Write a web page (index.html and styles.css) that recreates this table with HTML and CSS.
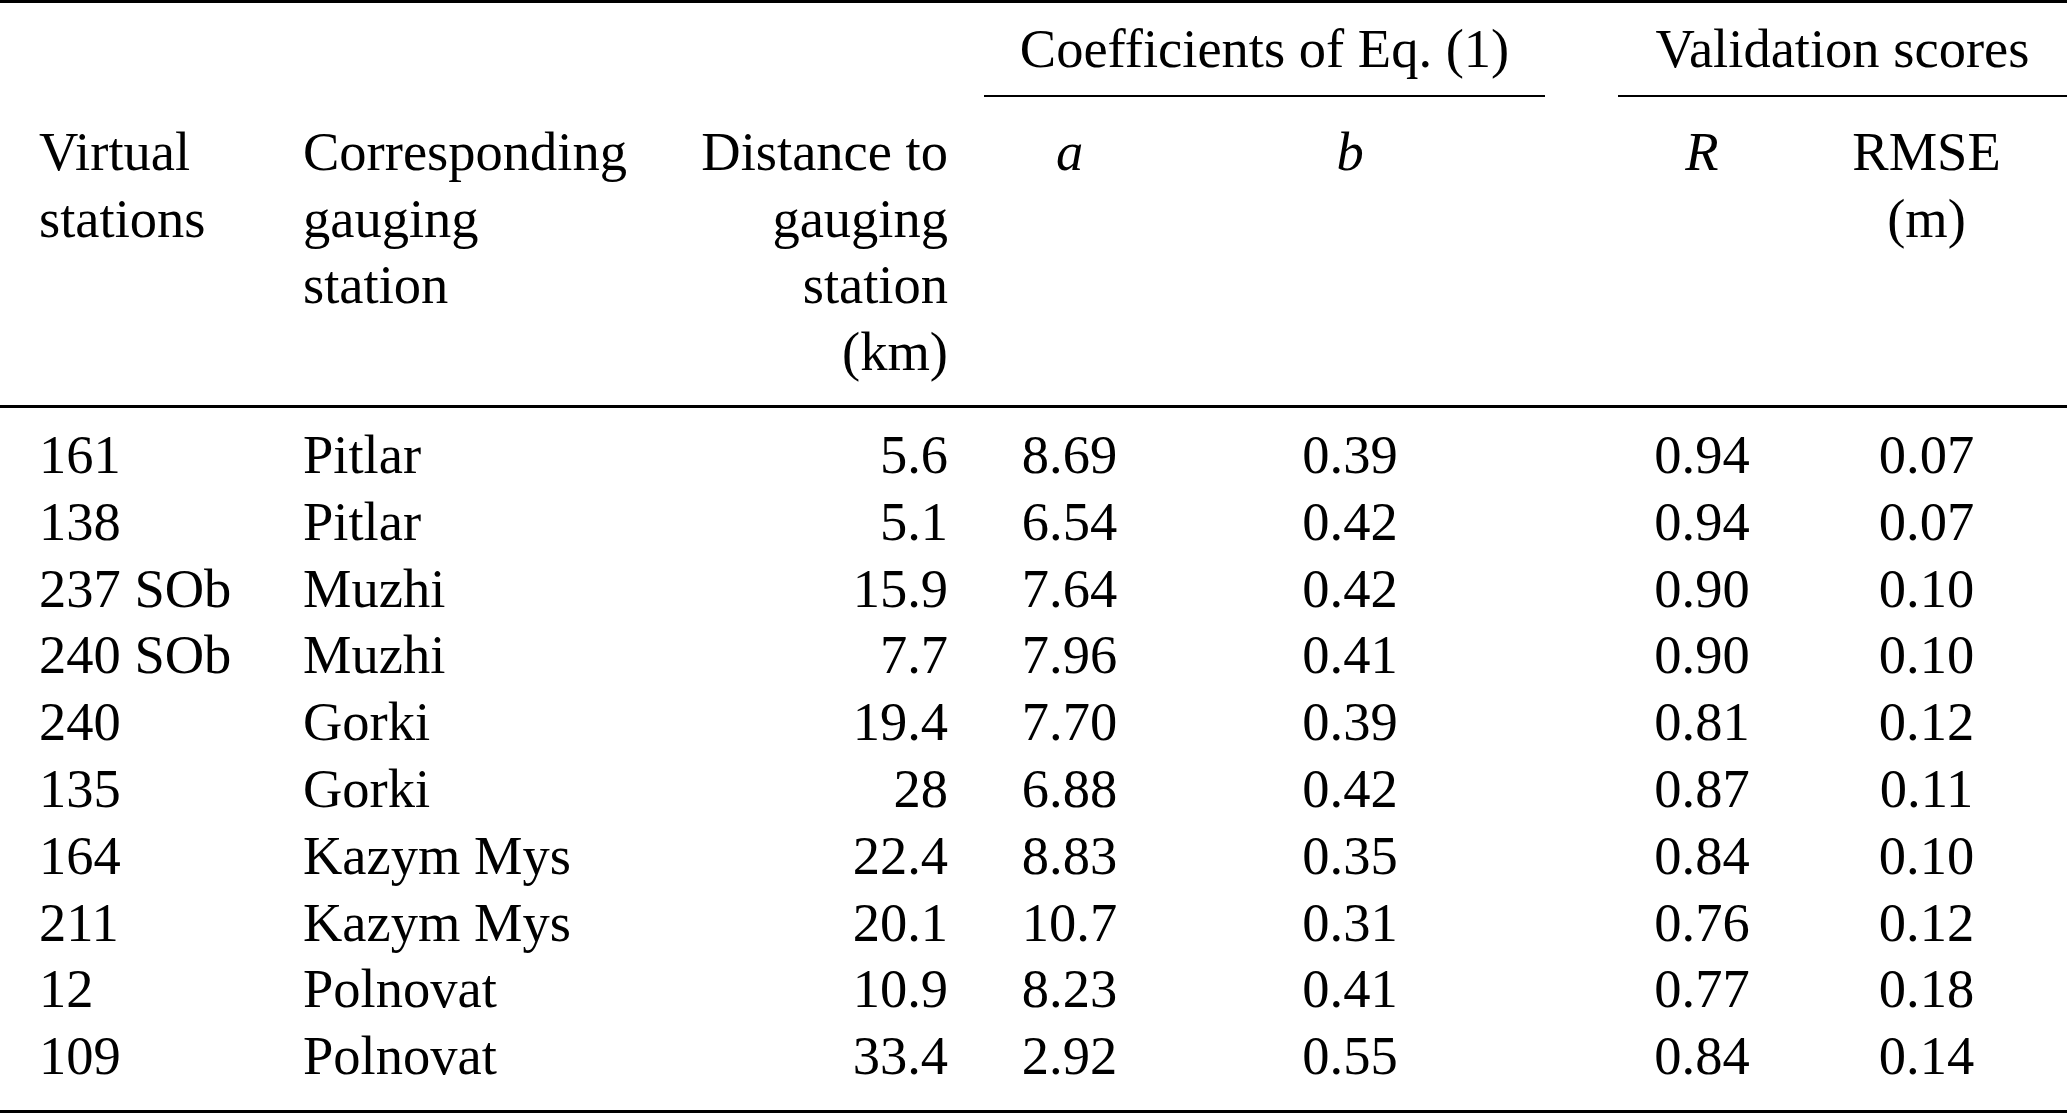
FILE: index.html
```html
<!DOCTYPE html>
<html lang="en">
<head>
<meta charset="utf-8">
<title>Table</title>
<link rel="stylesheet" href="styles.css">
</head>
<body>
<table class="tbl">
  <colgroup>
    <col class="c1"><col class="c2"><col class="c3"><col class="c4"><col class="c5"><col class="c6"><col class="c7"><col class="c8">
  </colgroup>
  <thead>
    <tr class="row-group">
      <th></th><th></th><th></th>
      <th colspan="2" class="group">Coefficients of Eq. (1)</th>
      <th></th>
      <th colspan="2" class="group">Validation scores</th>
    </tr>
    <tr class="row-head">
      <th class="left">Virtual<br>stations</th>
      <th class="left">Corresponding<br>gauging<br>station</th>
      <th class="right">Distance to<br>gauging<br>station<br>(km)</th>
      <th><i>a</i></th>
      <th><i>b</i></th>
      <th></th>
      <th><i>R</i></th>
      <th>RMSE<br>(m)</th>
    </tr>
  </thead>
  <tbody>
    <tr><td class="left">161</td><td class="left">Pitlar</td><td class="right">5.6</td><td>8.69</td><td>0.39</td><td></td><td>0.94</td><td>0.07</td></tr>
    <tr><td class="left">138</td><td class="left">Pitlar</td><td class="right">5.1</td><td>6.54</td><td>0.42</td><td></td><td>0.94</td><td>0.07</td></tr>
    <tr><td class="left">237 SOb</td><td class="left">Muzhi</td><td class="right">15.9</td><td>7.64</td><td>0.42</td><td></td><td>0.90</td><td>0.10</td></tr>
    <tr><td class="left">240 SOb</td><td class="left">Muzhi</td><td class="right">7.7</td><td>7.96</td><td>0.41</td><td></td><td>0.90</td><td>0.10</td></tr>
    <tr><td class="left">240</td><td class="left">Gorki</td><td class="right">19.4</td><td>7.70</td><td>0.39</td><td></td><td>0.81</td><td>0.12</td></tr>
    <tr><td class="left">135</td><td class="left">Gorki</td><td class="right">28</td><td>6.88</td><td>0.42</td><td></td><td>0.87</td><td>0.11</td></tr>
    <tr><td class="left">164</td><td class="left">Kazym Mys</td><td class="right">22.4</td><td>8.83</td><td>0.35</td><td></td><td>0.84</td><td>0.10</td></tr>
    <tr><td class="left">211</td><td class="left">Kazym Mys</td><td class="right">20.1</td><td>10.7</td><td>0.31</td><td></td><td>0.76</td><td>0.12</td></tr>
    <tr><td class="left">12</td><td class="left">Polnovat</td><td class="right">10.9</td><td>8.23</td><td>0.41</td><td></td><td>0.77</td><td>0.18</td></tr>
    <tr><td class="left">109</td><td class="left">Polnovat</td><td class="right">33.4</td><td>2.92</td><td>0.55</td><td></td><td>0.84</td><td>0.14</td></tr>
  </tbody>
</table>
</body>
</html>
```

FILE: styles.css
```css
html, body {
  margin: 0;
  padding: 0;
  background: #ffffff;
}

.tbl {
  width: 2067px;
  table-layout: fixed;
  border-collapse: separate;
  border-spacing: 0;
  font-family: "Liberation Serif", "Times New Roman", serif;
  font-size: 54.5px;
  line-height: 66.5px;
  color: #000000;
}

.tbl tbody {
  line-height: 66.8px;
}

.c1 { width: 264px; }
.c2 { width: 386px; }
.c3 { width: 334px; }
.c4 { width: 171px; }
.c5 { width: 390px; }
.c6 { width: 73px; }
.c7 { width: 168px; }
.c8 { width: 281px; }

.tbl th,
.tbl td {
  padding: 0;
  font-weight: normal;
  text-align: center;
  vertical-align: top;
  white-space: nowrap;
}

.tbl .left {
  text-align: left;
  padding-left: 39px;
}

.tbl .right {
  text-align: right;
  padding-right: 36px;
}

.row-group th {
  border-top: 3px solid #000;
  padding-top: 13px;
  padding-bottom: 12.5px;
}

.row-group th.group {
  border-bottom: 2px solid #000;
}

.row-group th:not(.group) {
  padding-bottom: 14.5px;
}

.row-head th {
  padding-top: 22px;
  padding-bottom: 20px;
  border-bottom: 3px solid #000;
}

.tbl tbody tr:first-child td {
  padding-top: 14px;
}

.tbl tbody tr:last-child td {
  padding-bottom: 20px;
  border-bottom: 3px solid #000;
}
```
